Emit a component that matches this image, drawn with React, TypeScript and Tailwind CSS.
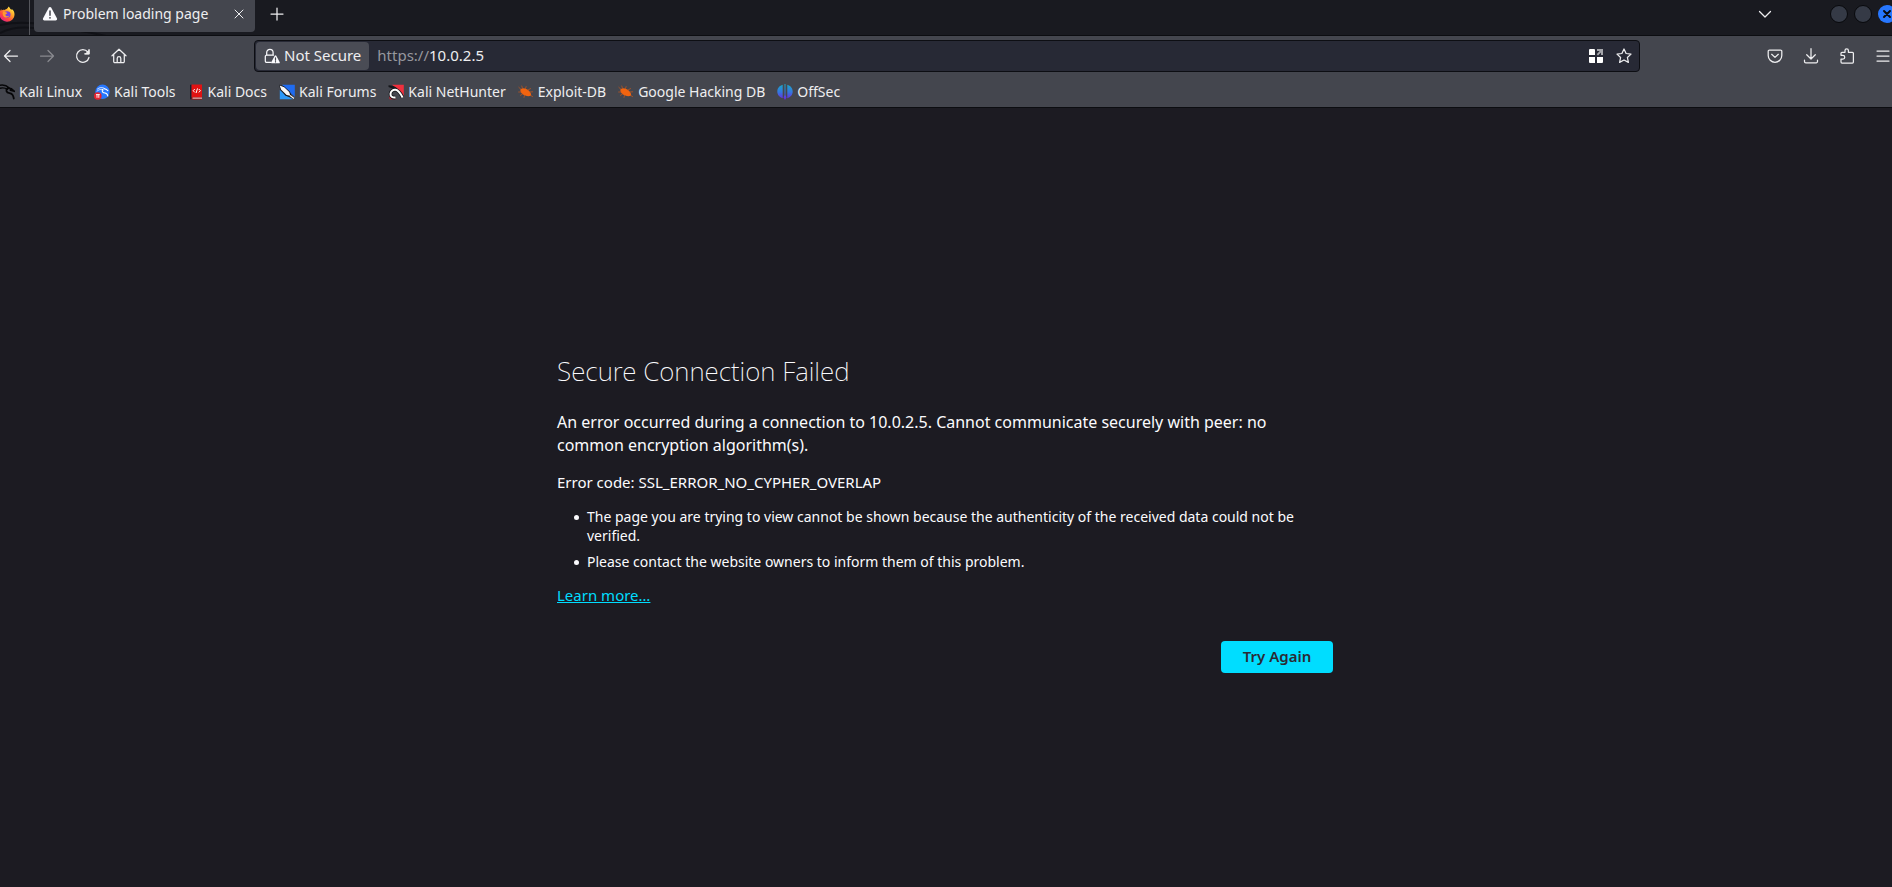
import React from "react";

type IconProps = { className?: string; children: React.ReactNode };

function Icon({ className = "size-4", children }: IconProps) {
  return (
    <svg
      viewBox="0 0 16 16"
      className={`${className} shrink-0`}
      fill="none"
      stroke="currentColor"
      strokeWidth="1.25"
      strokeLinecap="round"
      strokeLinejoin="round"
      aria-hidden="true"
    >
      {children}
    </svg>
  );
}

function FirefoxLogo() {
  return (
    <svg viewBox="0 0 16 16" className="size-4 shrink-0" aria-hidden="true">
      <defs>
        <linearGradient id="fx-body" x1="0.9" y1="0.1" x2="0.2" y2="0.95">
          <stop offset="0" stopColor="#fff44f" />
          <stop offset="0.35" stopColor="#ffa52a" />
          <stop offset="0.7" stopColor="#ff4a3d" />
          <stop offset="1" stopColor="#e3208a" />
        </linearGradient>
      </defs>
      <path
        d="M9.5.4c1 .8 1.600 1.800 1.900 2.600.6.200 1.100.5 1.500 1-.1-.5-.2-.8-.2-1.100C14.700 4.200 15.600 6.400 15.500 8.500 15.400 12.700 12.100 15.700 8 15.700S.5 12.500.5 8.400c0-2.200.6-4 1.800-5.400 0 .6.1 1 .3 1.400.9-.6 1.900-.7 2.700-.5C6.500 3 8.800 3 9.500.4z"
        fill="url(#fx-body)"
      />
      <circle cx="8.200" cy="8.500" r="3.300" fill="#7a3fe0" />
      <path d="M4.200 5.500c1.200-.3 2.300.2 2.900.9.700.1 1.300.3 1.300.7-.3 1-1.800.8-2 1.600.2 1.600 2.400 1.900 4 .9-1 2.400-4.500 2.700-6 .4-.8-1.300-.9-3-.2-4.500z" fill="#ff9a2e" />
    </svg>
  );
}

function WarningIcon() {
  return (
    <svg viewBox="0 0 16 16" className="size-4 shrink-0" aria-hidden="true">
      <path d="M6.700 1.700a1.500 1.500 0 0 1 2.600 0l5.600 10.600a1.500 1.500 0 0 1-1.300 2.200H2.400a1.500 1.500 0 0 1-1.300-2.200z" fill="#fbfbfe" />
      <path d="M8 5v4.200" stroke="#44464e" strokeWidth="1.500" strokeLinecap="round" />
      <circle cx="8" cy="11.800" r="0.900" fill="#44464e" />
    </svg>
  );
}

function InsecureLock() {
  return (
    <svg viewBox="0 0 16 16" className="size-4 shrink-0" fill="none" aria-hidden="true">
      <path d="M7 14.400H2.600a1.300 1.300 0 0 1-1.300-1.300V8.500a1.300 1.300 0 0 1 1.300-1.300h6.800M2.700 7V4.500a3.200 3.200 0 0 1 6.400 0V7" stroke="#fbfbfe" strokeWidth="1.200" strokeLinecap="round" />
      <path d="M10.700 7.700a.9.900 0 0 1 1.600 0l3.300 6.300a.9.900 0 0 1-.8 1.300H8.200a.9.900 0 0 1-.8-1.300z" fill="#fbfbfe" />
      <path d="M11.500 9.800v2.400M11.500 13.600v.3" stroke="#44464e" strokeWidth="1.200" strokeLinecap="round" />
    </svg>
  );
}

function KaliDragon() {
  return (
    <svg viewBox="0 0 16 16" className="size-4 shrink-0" fill="none" stroke="#060608" strokeLinecap="round" aria-hidden="true">
      <path d="M1 1.200c3.600-.6 6.600.2 9 2.600" strokeWidth="1.400" />
      <path d="M0 4.600c3.500-1.300 6-.9 8.600.8" strokeWidth="1.300" />
      <path d="M8.800 4c-2.600 2-1.500 4.700 1.700 5.200 2.600.4 3.800 1.900 4.300 5.300" strokeWidth="1.800" />
      <path d="M9.500 4.200c2.200 0 3.700.7 5.500 2.800l-3.600-.9" strokeWidth="1.700" />
    </svg>
  );
}

function KaliToolsIcon() {
  return (
    <svg viewBox="0 0 16 16" className="size-4 shrink-0" aria-hidden="true">
      <circle cx="8.500" cy="7.800" r="7.200" fill="#2777ff" />
      <g fill="none" stroke="#fff" strokeLinecap="round">
        <path d="M3.500 5C6 3 9 3.200 11 4.800" strokeWidth="0.900" />
        <path d="M3 7.200C5.500 5 8 5 9.500 6" strokeWidth="0.800" />
        <path d="M8.500 5.500c-1 2.300.7 3.300 2.500 3.500 1.700.2 2.500 1.500 2.800 3M10 4.800c1.500 0 2.700.5 3.800 1.800" strokeWidth="1.100" />
      </g>
      <circle cx="3.800" cy="12" r="3.800" fill="#e5222f" />
      <path d="M2 10.600h3.800M3 10.600v3.200M4.800 10.600v3.200" stroke="#fff" strokeWidth="0.900" />
    </svg>
  );
}

function KaliDocsIcon() {
  return (
    <svg viewBox="0 0 16 16" className="size-4 shrink-0" aria-hidden="true">
      <path d="M2 .8h1.800v14.400H2z" fill="#18202e" />
      <path d="M3.500.500H14v12.500H3.500z" fill="#e01212" />
      <path d="M3.500 13H14v2.500H3.500z" fill="#a30d0d" />
      <path d="M4.500 13.600H14v1H4.500z" fill="#e9e3e3" />
      <path d="M6.800 5 5.200 6.700l1.600 1.700M10.800 5l1.600 1.700-1.600 1.700M9.500 4.400 8.100 9" fill="none" stroke="#fff" strokeWidth="1" />
    </svg>
  );
}

function KaliForumsIcon() {
  return (
    <svg viewBox="0 0 16 16" className="size-4 shrink-0" aria-hidden="true">
      <path d="M3 .8h12.800v12L9 7z" fill="#1f6bf0" />
      <path d="M.8 6v9.200H14L8 12z" fill="#2b98f8" />
      <path d="M0 .8 5 2.200l6 5.600 1.200 3.300 3.800 4.100-5.500-2.200-4-1.300L1.500 6z" fill="#101218" />
      <path d="M.6 1.400 5.200 3.300l5 4.800 1.200 3.700-3.800-.9L2.200 5.800z" fill="#f7f7f7" />
      <path d="m11 11.500 4 3" stroke="#fff" strokeWidth="1.200" />
    </svg>
  );
}

function NetHunterIcon() {
  return (
    <svg viewBox="0 0 16 16" className="size-4 shrink-0" aria-hidden="true">
      <path d="M4 .8h11.800v11.700L10 6z" fill="#f0303e" />
      <path d="M1.500 10v5.200h7L4.500 13z" fill="#d81f2c" />
      <path d="M.5 1.200C4 1.200 7 2.200 9.500 4.500L8 6 .5 3z" fill="#15161b" />
      <path d="M7.500 13.500C4.300 14 2.300 12.300 2.500 9.900 2.700 7.200 5 5.600 7.400 5.800c2.800.2 4.600 2.600 7.200 7.700" fill="none" stroke="#15161b" strokeWidth="3.600" />
      <path d="M7.500 13.500C4.300 14 2.300 12.300 2.500 9.900 2.700 7.200 5 5.600 7.400 5.800c2.800.2 4.600 2.600 7.200 7.700" fill="none" stroke="#fff" strokeWidth="2" />
    </svg>
  );
}

function BugIcon() {
  return (
    <svg viewBox="0 0 16 16" className="size-4 shrink-0" aria-hidden="true">
      <path d="M2.600 5.200C5 3.500 8.500 4.300 11 6.800c1.900 1.900 2.600 3.900 1.800 5-2.400.9-6 .3-8.300-1.700C2.700 8.600 1.900 6.500 2.600 5.200z" fill="#f2640f" />
      <g fill="none" stroke="#c9581a" strokeWidth="0.700" strokeLinecap="round">
        <path d="M2.800 5.200.8 3.300M4.500 4.500 3.800 2M7.500 4.600l.6-2M10 6l2.600-1.400M12 8l2.700-.2M3 8H.6M4.500 10l-2 1.300M6.500 11.300 6 13.400M13 11.600l1.600 1" />
      </g>
    </svg>
  );
}

function OffSecIcon() {
  return (
    <svg viewBox="0 0 16 16" className="size-4 shrink-0" aria-hidden="true">
      <defs>
        <linearGradient id="offsec" x1="0" y1="0" x2="0" y2="1">
          <stop offset="0" stopColor="#1aa9c4" />
          <stop offset="0.5" stopColor="#3478e0" />
          <stop offset="1" stopColor="#7020e0" />
        </linearGradient>
      </defs>
      <path
        d="M5.700.8v13.500C2.600 13.300.3 10.900.3 7.500S2.600 1.700 5.700.8zM10.300.8v13.500c3.100-1 5.400-3.400 5.400-6.800S13.400 1.700 10.300.8zM7.500 0h1v11l1 2.500L8 16l-1.500-2.500 1-2.500z"
        fill="url(#offsec)"
      />
    </svg>
  );
}

const bookmarks = [
  { label: "Kali Linux", icon: <KaliDragon /> },
  { label: "Kali Tools", icon: <KaliToolsIcon /> },
  { label: "Kali Docs", icon: <KaliDocsIcon /> },
  { label: "Kali Forums", icon: <KaliForumsIcon /> },
  { label: "Kali NetHunter", icon: <NetHunterIcon /> },
  { label: "Exploit-DB", icon: <BugIcon /> },
  { label: "Google Hacking DB", icon: <BugIcon /> },
  { label: "OffSec", icon: <OffSecIcon /> },
];

const reasons = [
  "The page you are trying to view cannot be shown because the authenticity of the received data could not be verified.",
  "Please contact the website owners to inform them of this problem.",
];

function ToolButton({ label, disabled, children }: { label: string; disabled?: boolean; children: React.ReactNode }) {
  return (
    <button
      type="button"
      aria-label={label}
      disabled={disabled}
      className="flex h-8 w-9 shrink-0 items-center justify-center disabled:opacity-40"
    >
      {children}
    </button>
  );
}

function TitleBar() {
  return (
    <header className="relative flex h-9 items-start overflow-hidden border-b border-[#0c0d11] bg-[#191a20]">
      <svg className="absolute top-0 left-0 h-9 w-32" viewBox="0 0 128 36" fill="none" stroke="#101116" aria-hidden="true">
        <path d="M0 25c14-3 30-3 46 0s38 6 60 11M0 33c10-5 24-7 40-4" strokeWidth="2" />
      </svg>
      <div className="relative flex h-full w-[30px] shrink-0 border-r border-[#55565c]">
        <button type="button" aria-label="Firefox View" className="-ml-px flex h-7 items-center">
          <FirefoxLogo />
        </button>
      </div>
      <div className="relative ml-1 flex h-8 w-[221px] shrink-0 items-center gap-1 rounded-b bg-[#44464e] pr-2 pb-1 pl-2">
        <WarningIcon />
        <span className="ml-px flex-1 truncate">Problem loading page</span>
        <button type="button" aria-label="Close tab" className="flex size-4 items-center justify-center">
          <Icon className="size-4">
            <path d="m4 4 8 8M12 4l-8 8" strokeWidth="1" />
          </Icon>
        </button>
      </div>
      <button type="button" aria-label="New tab" className="ml-1 flex h-7 w-9 items-center justify-center">
        <Icon>
          <path d="M8 2v12M2 8h12" />
        </Icon>
      </button>
      <div className="flex-1" />
      <button type="button" aria-label="List all tabs" className="mr-[47px] flex h-7 w-9 items-center justify-center">
        <Icon>
          <path d="m2.500 5.500 5.500 5.500 5.500-5.500" />
        </Icon>
      </button>
      <div className="-mr-1 flex h-7 items-center gap-[6px]">
        <button type="button" aria-label="Minimize" className="size-[18px] rounded-full border border-[#08090c] bg-[#353a46]" />
        <button type="button" aria-label="Maximize" className="size-[18px] rounded-full border border-[#08090c] bg-[#353a46]" />
        <button type="button" aria-label="Close window" className="flex size-[18px] items-center justify-center rounded-full bg-[#2777ff] text-[#0b0c10]">
          <Icon>
            <path d="m5 5 6 6M11 5l-6 6" strokeWidth="2" />
          </Icon>
        </button>
      </div>
    </header>
  );
}

function NavBar() {
  return (
    <nav aria-label="Navigation" className="flex h-10 items-center overflow-hidden">
      <div className="-ml-[7px] flex">
        <ToolButton label="Back">
          <Icon>
            <path d="M14.500 8h-13M7 2.500 1.500 8 7 13.500" />
          </Icon>
        </ToolButton>
        <ToolButton label="Forward" disabled>
          <Icon>
            <path d="M1.500 8h13M9 2.500 14.500 8 9 13.500" />
          </Icon>
        </ToolButton>
        <ToolButton label="Reload">
          <Icon>
            <path d="M14 9.500A6.300 6.300 0 1 1 12.800 4M14 1.500v4.300H9.700" />
            <path d="M14.200 2.200v3.800h-3.800z" fill="currentColor" strokeWidth="0.600" />
          </Icon>
        </ToolButton>
        <ToolButton label="Home">
          <Icon>
            <path d="M1 7.800 8 1.200l7 6.600M2.700 6.500v7a1.200 1.200 0 0 0 1.200 1.200h8.200a1.200 1.200 0 0 0 1.200-1.200v-7M6.200 14.500V10.500a1.800 1.800 0 0 1 3.600 0v4" />
          </Icon>
        </ToolButton>
      </div>
      <div className="w-[117px] shrink-0" />
      <div className="flex h-8 min-w-0 flex-1 items-center rounded border border-[#0d0e13] bg-[#272935] p-px text-[15px]">
        <button type="button" className="flex h-7 shrink-0 items-center gap-1 rounded-sm bg-[#4a4c55] px-2">
          <InsecureLock />
          Not Secure
        </button>
        <label className="ml-2 flex min-w-0 flex-1 items-center">
          <span className="text-[#96979e]">https://</span>
          <input
            type="text"
            aria-label="Address"
            defaultValue="10.0.2.5"
            className="min-w-0 flex-1 bg-transparent outline-none"
          />
        </label>
        <button type="button" aria-label="Open in container" className="flex h-7 w-7 items-center justify-center">
          <svg viewBox="0 0 16 16" className="size-4" aria-hidden="true">
            <path d="M2 1h4a1 1 0 0 1 1 1v5H1V2a1 1 0 0 1 1-1zM1 9h6v6H2a1 1 0 0 1-1-1zM9 9h6v5a1 1 0 0 1-1 1H9z" fill="#fff" />
            <path d="M9 1h6v6h-2V4.500L10 7.500 8.700 6.200 11.700 3H9z" fill="#a5a6ab" />
          </svg>
        </button>
        <button type="button" aria-label="Bookmark this page" className="flex h-7 w-7 items-center justify-center">
          <Icon>
            <path d="m8 1 2.100 4.500 4.900.6-3.600 3.400 1 4.900L8 12l-4.400 2.400 1-4.900L1 6.100l4.900-.6z" />
          </Icon>
        </button>
      </div>
      <div className="w-[117px] shrink-0" />
      <div className="-mr-[9px] flex">
        <ToolButton label="Save to Pocket">
          <Icon>
            <path d="M2.500 2h11A1.300 1.300 0 0 1 14.800 3.300V7.500a6.800 6.800 0 0 1-13.600 0V3.300A1.300 1.300 0 0 1 2.500 2zM4.700 6.300 8 9.400l3.300-3.100" />
          </Icon>
        </ToolButton>
        <ToolButton label="Downloads">
          <Icon>
            <path d="M8 .7v10M3.700 6.700 8 11l4.300-4.300M1.500 12.200v1.300A1.300 1.300 0 0 0 2.800 14.800h10.400a1.300 1.300 0 0 0 1.300-1.300v-1.300" />
          </Icon>
        </ToolButton>
        <ToolButton label="Extensions">
          <Icon>
            <path d="M2 7.300V5.300a1 1 0 0 1 1-1h3V2.500a1.700 1.700 0 0 1 3.400 0v1.800h4a1 1 0 0 1 1 1v8.700a1 1 0 0 1-1 1H3a1 1 0 0 1-1-1v-3h1.900a1.850 1.850 0 0 0 0-3.700z" />
          </Icon>
        </ToolButton>
        <ToolButton label="Application menu">
          <Icon>
            <path d="M2 3h12M2 8h12M2 13h12" />
          </Icon>
        </ToolButton>
      </div>
    </nav>
  );
}

function BookmarksBar() {
  return (
    <nav aria-label="Bookmarks" className="-ml-px flex h-[31px] items-center gap-3 overflow-hidden">
      {bookmarks.map(({ label, icon }) => (
        <a key={label} href="#" className="flex shrink-0 items-center gap-1">
          {icon}
          {label}
        </a>
      ))}
    </nav>
  );
}

function ErrorPage() {
  return (
    <main className="flex flex-1 items-center justify-center pt-8 pr-[26px] pl-6 text-[#fbfbfe]">
      <div className="w-full max-w-[776px]">
        <h1 className="mb-6 text-[26px] leading-8 font-extralight">Secure Connection Failed</h1>
        <p className="mb-4 text-base leading-[23px]">
          An error occurred during a connection to 10.0.2.5. Cannot communicate securely with peer: no common
          encryption algorithm(s).
        </p>
        <p className="mb-[15px] text-[15px] leading-[19px]">Error code: SSL_ERROR_NO_CYPHER_OVERLAP</p>
        <ul className="mb-[15px] space-y-[7px] pl-[17px] leading-[19px]">
          {reasons.map((reason) => (
            <li key={reason} className="flex gap-2">
              <span className="mt-2 size-[5px] shrink-0 rounded-full bg-[#fbfbfe]" />
              <span>{reason}</span>
            </li>
          ))}
        </ul>
        <a href="#" className="block w-fit text-[15px] leading-[19px] text-[#00ddff] underline">
          Learn more…
        </a>
        <div className="mt-9 flex justify-end">
          <button type="button" className="h-8 w-28 rounded bg-[#00ddff] text-[15px] font-semibold text-[#2b2a33]">
            Try Again
          </button>
        </div>
      </div>
    </main>
  );
}

export default function App() {
  return (
    <div className="flex min-h-screen flex-col overflow-hidden bg-[#1c1b22] font-['Noto_Sans','Open_Sans',sans-serif] text-sm text-[#eeeef0]">
      <TitleBar />
      <div className="border-b border-[#0c0d11] bg-[#44464e]">
        <NavBar />
        <BookmarksBar />
      </div>
      <ErrorPage />
    </div>
  );
}
